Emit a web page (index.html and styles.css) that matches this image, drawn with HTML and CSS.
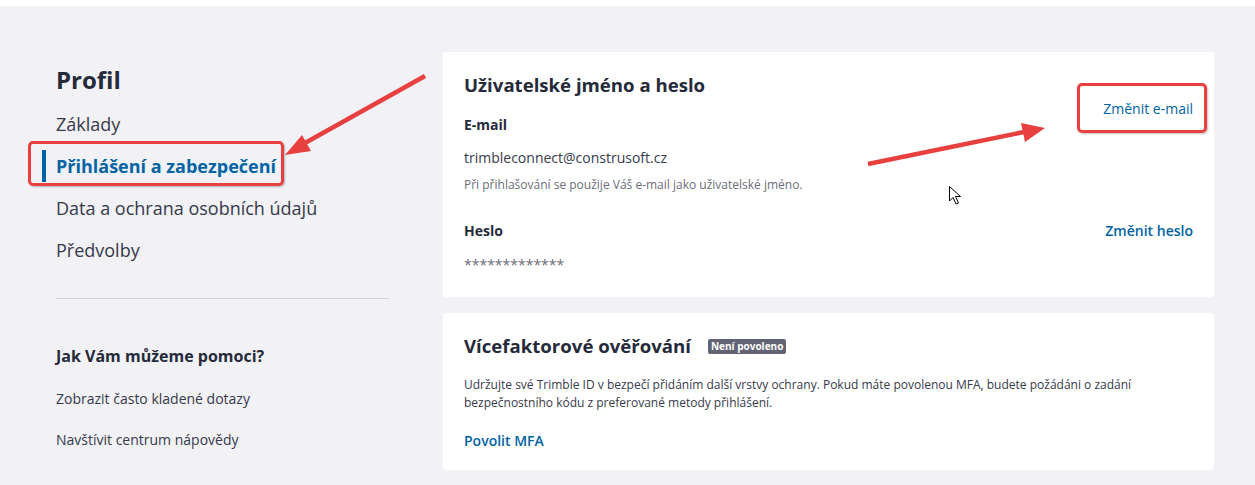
FILE: index.html
```html
<!DOCTYPE html>
<html lang="cs">
<head>
    <meta charset="UTF-8">
    <meta name="viewport" content="width=device-width, initial-scale=1.0">
    <title>Trimble ID - Přihlášení a zabezpečení</title>
    <link rel="stylesheet" href="styles.css">
</head>
<body>
    <div class="page">
        <aside class="sidebar">
            <h1 class="sidebar-title">Profil</h1>
            <nav class="side-nav">
                <a href="#" class="side-link">Základy</a>
                <a href="#" class="side-link active">Přihlášení a zabezpečení</a>
                <a href="#" class="side-link">Data a ochrana osobních údajů</a>
                <a href="#" class="side-link">Předvolby</a>
            </nav>
            <hr class="side-divider">
            <h2 class="help-title">Jak Vám můžeme pomoci?</h2>
            <a href="#" class="help-link">Zobrazit často kladené dotazy</a>
            <a href="#" class="help-link">Navštívit centrum nápovědy</a>
        </aside>

        <main class="content">
            <section class="card">
                <h2 class="card-title">Uživatelské jméno a heslo</h2>
                <div class="field-row">
                    <div class="field">
                        <div class="field-label">E-mail</div>
                        <div class="field-value">trimbleconnect@construsoft.cz</div>
                        <div class="field-hint">Při přihlašování se použije Váš e-mail jako uživatelské jméno.</div>
                    </div>
                    <a href="#" class="card-link raised">Změnit e-mail</a>
                </div>
                <div class="field-row password-row">
                    <div class="field-label">Heslo</div>
                    <a href="#" class="card-link strong">Změnit heslo</a>
                </div>
                <div class="field-value masked">*************</div>
            </section>

            <section class="card card-mfa">
                <div class="card-head">
                    <h2 class="card-title">Vícefaktorové ověřování</h2>
                    <span class="badge">Není povoleno</span>
                </div>
                <p class="card-text">Udržujte své Trimble ID v bezpečí přidáním další vrstvy ochrany. Pokud máte povolenou MFA, budete požádáni o zadání bezpečnostního kódu z preferované metody přihlášení.</p>
                <a href="#" class="card-link strong">Povolit MFA</a>
            </section>
        </main>

        <!-- screenshot annotations -->
        <div class="mark mark-nav"></div>
        <div class="mark mark-email"></div>
        <svg class="annotations" width="1255" height="485" viewBox="0 0 1255 485">
            <g class="arrow">
                <line x1="425" y1="76" x2="305" y2="143"/>
                <polygon points="285,155 302,135 311,151"/>
                <line x1="868" y1="164" x2="1024" y2="132"/>
                <polygon points="1045,128 1021,123 1025,142"/>
            </g>
            <path class="cursor" d="M949.5 186.5 L949.5 201 L953 197.5 L956 204 L958.5 203 L955.5 196.5 L960.5 196.5 Z"/>
        </svg>
    </div>
</body>
</html>
```

FILE: styles.css
```css
:root {
    --bg: #f1f1f6;
    --text: #252a3a;
    --text-soft: #363a4a;
    --text-muted: #6a6e79;
    --blue: #0063a3;
    --divider: #d0d1d9;
    --badge: #626473;
    --mark: #e8403f;
}

* {
    margin: 0;
    padding: 0;
    box-sizing: border-box;
}

body {
    font-family: 'Open Sans', 'Noto Sans', sans-serif;
    background: var(--bg);
    color: var(--text);
    border-top: 6px solid #fff;
    min-height: 100vh;
}

a {
    text-decoration: none;
}

.page {
    position: relative;
    display: flex;
    gap: 54px;
    padding: 46px 41px 0 56px;
}

/* sidebar */
.sidebar {
    width: 333px;
    flex-shrink: 0;
    padding-top: 12px;
}

.sidebar-title {
    font-size: 24px;
    font-weight: 700;
    line-height: 32px;
    margin-bottom: 12px;
}

.side-nav {
    display: flex;
    flex-direction: column;
    gap: 10px;
}

.side-link {
    display: block;
    font-size: 18px;
    line-height: 32px;
    color: var(--text-soft);
    border-left: 4px solid transparent;
    padding-left: 10px;
    margin-left: -14px;
}

.side-link.active {
    color: var(--blue);
    font-weight: 700;
    border-left-color: var(--blue);
}

.side-divider {
    border: none;
    border-top: 1px solid var(--divider);
    margin: 32px 0 45px;
}

.help-title {
    font-size: 16px;
    font-weight: 700;
    line-height: 24px;
    margin-bottom: 21px;
}

.help-link {
    display: block;
    font-size: 14px;
    line-height: 20px;
    color: var(--text-soft);
    margin-bottom: 21px;
}

/* cards */
.content {
    flex: 1;
    display: flex;
    flex-direction: column;
    gap: 16px;
}

.card {
    background: #fff;
    border-radius: 3px;
    padding: 21px 21px 22px;
}

.card-mfa {
    padding-bottom: 19px;
}

.card-title {
    font-size: 18.6px;
    font-weight: 700;
    line-height: 24px;
}

.card > .card-title {
    margin-bottom: 2px;
}

.field-row {
    display: flex;
    justify-content: space-between;
    align-items: flex-start;
}

.field {
    padding-top: 16px;
}

.field-label {
    font-size: 14px;
    font-weight: 700;
    line-height: 20px;
}

.field-value {
    font-size: 14px;
    line-height: 20px;
    color: var(--text-soft);
    margin-top: 13px;
}

.field-hint {
    font-size: 12px;
    line-height: 16px;
    color: var(--text-muted);
    margin-top: 9px;
}

.password-row {
    align-items: baseline;
    margin-top: 28px;
}

.field-value.masked {
    margin-top: 14px;
    color: var(--text-muted);
}

.card-link {
    font-size: 14px;
    line-height: 20px;
    color: var(--blue);
}

.card-link.raised {
    font-weight: 500;
}

.card-link.strong {
    font-weight: 600;
}

.card-head {
    display: flex;
    align-items: center;
    gap: 17px;
}

.badge {
    background: var(--badge);
    color: #fff;
    font-size: 10px;
    font-weight: 700;
    line-height: 15px;
    padding: 0 3px;
    border-radius: 2px;
}

.card-text {
    font-size: 12px;
    line-height: 18px;
    color: var(--text-soft);
    margin: 18px 0 17px;
}

/* annotations laid over the screenshot */
.mark {
    position: absolute;
    border: 3px solid var(--mark);
    border-radius: 5px;
    box-shadow: 1px 1px 2px rgba(0, 0, 0, 0.25);
}

.mark-nav {
    left: 28px;
    top: 135px;
    width: 256px;
    height: 45px;
}

.mark-email {
    left: 1077px;
    top: 77px;
    width: 130px;
    height: 50px;
}

.annotations {
    position: absolute;
    left: 0;
    top: -6px;
    pointer-events: none;
}

.arrow line {
    stroke: var(--mark);
    stroke-width: 4.5;
}

.arrow polygon {
    fill: var(--mark);
}

.cursor {
    fill: #fff;
    stroke: #000;
    stroke-width: 1;
}
```
